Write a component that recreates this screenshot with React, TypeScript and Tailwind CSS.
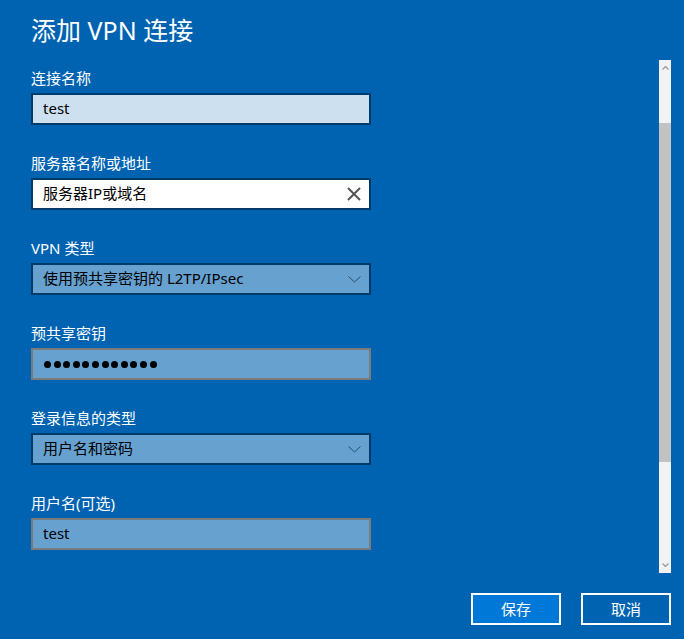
import React from 'react';

const Chevron: React.FC<{ className?: string }> = ({ className }) => (
    <svg width="13" height="7" viewBox="0 0 13 7" className={className}>
        <path d="M0.5 0.5 L6.5 6 L12.5 0.5" fill="none" stroke="currentColor" strokeWidth="1" />
    </svg>
);

const Label: React.FC<{ text: string; first?: boolean }> = ({ text, first }) => (
    <div className={`${first ? 'mt-[22px]' : 'mt-[28px]'} text-[15px] leading-[20px] text-white mb-[5px]`}>{text}</div>
);

const App: React.FC = () => {
    const dots = Array.from({ length: 12 });

    return (
        <div className="w-[684px] h-[639px] bg-[#0063b1] flex flex-col overflow-hidden font-['Noto_Sans','Noto_Sans_CJK_SC',sans-serif]">
            <div className="flex flex-1 min-h-0">
                <div className="flex-1 pl-[31px] pt-[14px]">
                    <h1 className="text-[25px] leading-[32px] text-white font-normal">添加 VPN 连接</h1>

                    {/* 连接名称 */}
                    <Label text="连接名称" first />
                    <div className="w-[340px] h-[32px] border-2 border-[#003b6a] bg-[#cce0f0] flex items-center pl-[10px] pb-[2px] text-[15px] leading-[20px] text-black">
                        test
                    </div>

                    {/* 服务器 */}
                    <Label text="服务器名称或地址" />
                    <div className="w-[340px] h-[32px] border-2 border-[#003b6a] bg-white flex items-center justify-between pl-[10px] pr-[8px] text-[15px] leading-[20px] text-black">
                        <span className="pb-[2px]">服务器IP或域名</span>
                        <svg width="14" height="14" viewBox="0 0 14 14" className="text-[#555555]">
                            <path d="M1 1 L13 13 M13 1 L1 13" stroke="currentColor" strokeWidth="2" fill="none" />
                        </svg>
                    </div>

                    {/* VPN 类型 */}
                    <Label text="VPN 类型" />
                    <div className="w-[340px] h-[32px] border-2 border-[#003b6a] bg-[#66a1d0] flex items-center justify-between pl-[10px] pr-[8px] text-[15px] leading-[20px] text-black">
                        <span className="pb-[2px]">使用预共享密钥的 L2TP/IPsec</span>
                        <Chevron className="text-[#2c4e6e]" />
                    </div>

                    {/* 预共享密钥 */}
                    <Label text="预共享密钥" />
                    <div className="w-[340px] h-[32px] border-2 border-[#7a7a7a] bg-[#66a1d0] flex items-center pl-[11px]">
                        {dots.map((_, i) => (
                            <span key={i} className="w-[7px] h-[7px] rounded-full bg-black mr-[2.6px]"></span>
                        ))}
                    </div>

                    {/* 登录信息 */}
                    <Label text="登录信息的类型" />
                    <div className="w-[340px] h-[32px] border-2 border-[#003b6a] bg-[#66a1d0] flex items-center justify-between pl-[10px] pr-[8px] text-[15px] leading-[20px] text-black">
                        <span className="pb-[2px]">用户名和密码</span>
                        <Chevron className="text-[#2c4e6e]" />
                    </div>

                    {/* 用户名 */}
                    <Label text="用户名(可选)" />
                    <div className="w-[340px] h-[32px] border-2 border-[#7a7a7a] bg-[#66a1d0] flex items-center pl-[10px] pb-[2px] text-[15px] leading-[20px] text-black">
                        test
                    </div>
                </div>

                {/* scrollbar */}
                <div className="w-[12px] mt-[60px] mr-[13px] bg-[#f2f2f2] flex flex-col">
                    <div className="h-[16px] flex items-center justify-center">
                        <svg width="7" height="4" viewBox="0 0 7 4" className="text-[#9a9a9a]">
                            <path d="M0.5 3.5 L3.5 0.5 L6.5 3.5" fill="none" stroke="currentColor" strokeWidth="1.3" />
                        </svg>
                    </div>
                    <div className="h-[47px]"></div>
                    <div className="h-[339px] bg-[#c2c2c2]"></div>
                    <div className="flex-1"></div>
                    <div className="h-[16px] flex items-center justify-center">
                        <svg width="7" height="4" viewBox="0 0 7 4" className="text-[#9a9a9a]">
                            <path d="M0.5 0.5 L3.5 3.5 L6.5 0.5" fill="none" stroke="currentColor" strokeWidth="1.3" />
                        </svg>
                    </div>
                </div>
            </div>

            <div className="flex justify-end gap-[20px] pr-[13px] pt-[20px] pb-[14px]">
                <button className="w-[90px] h-[32px] border-2 border-white bg-[#0078d7] text-white text-[15px]">保存</button>
                <button className="w-[90px] h-[32px] border-2 border-white bg-[#0063b1] text-white text-[15px]">取消</button>
            </div>
        </div>
    );
};

export default App;
